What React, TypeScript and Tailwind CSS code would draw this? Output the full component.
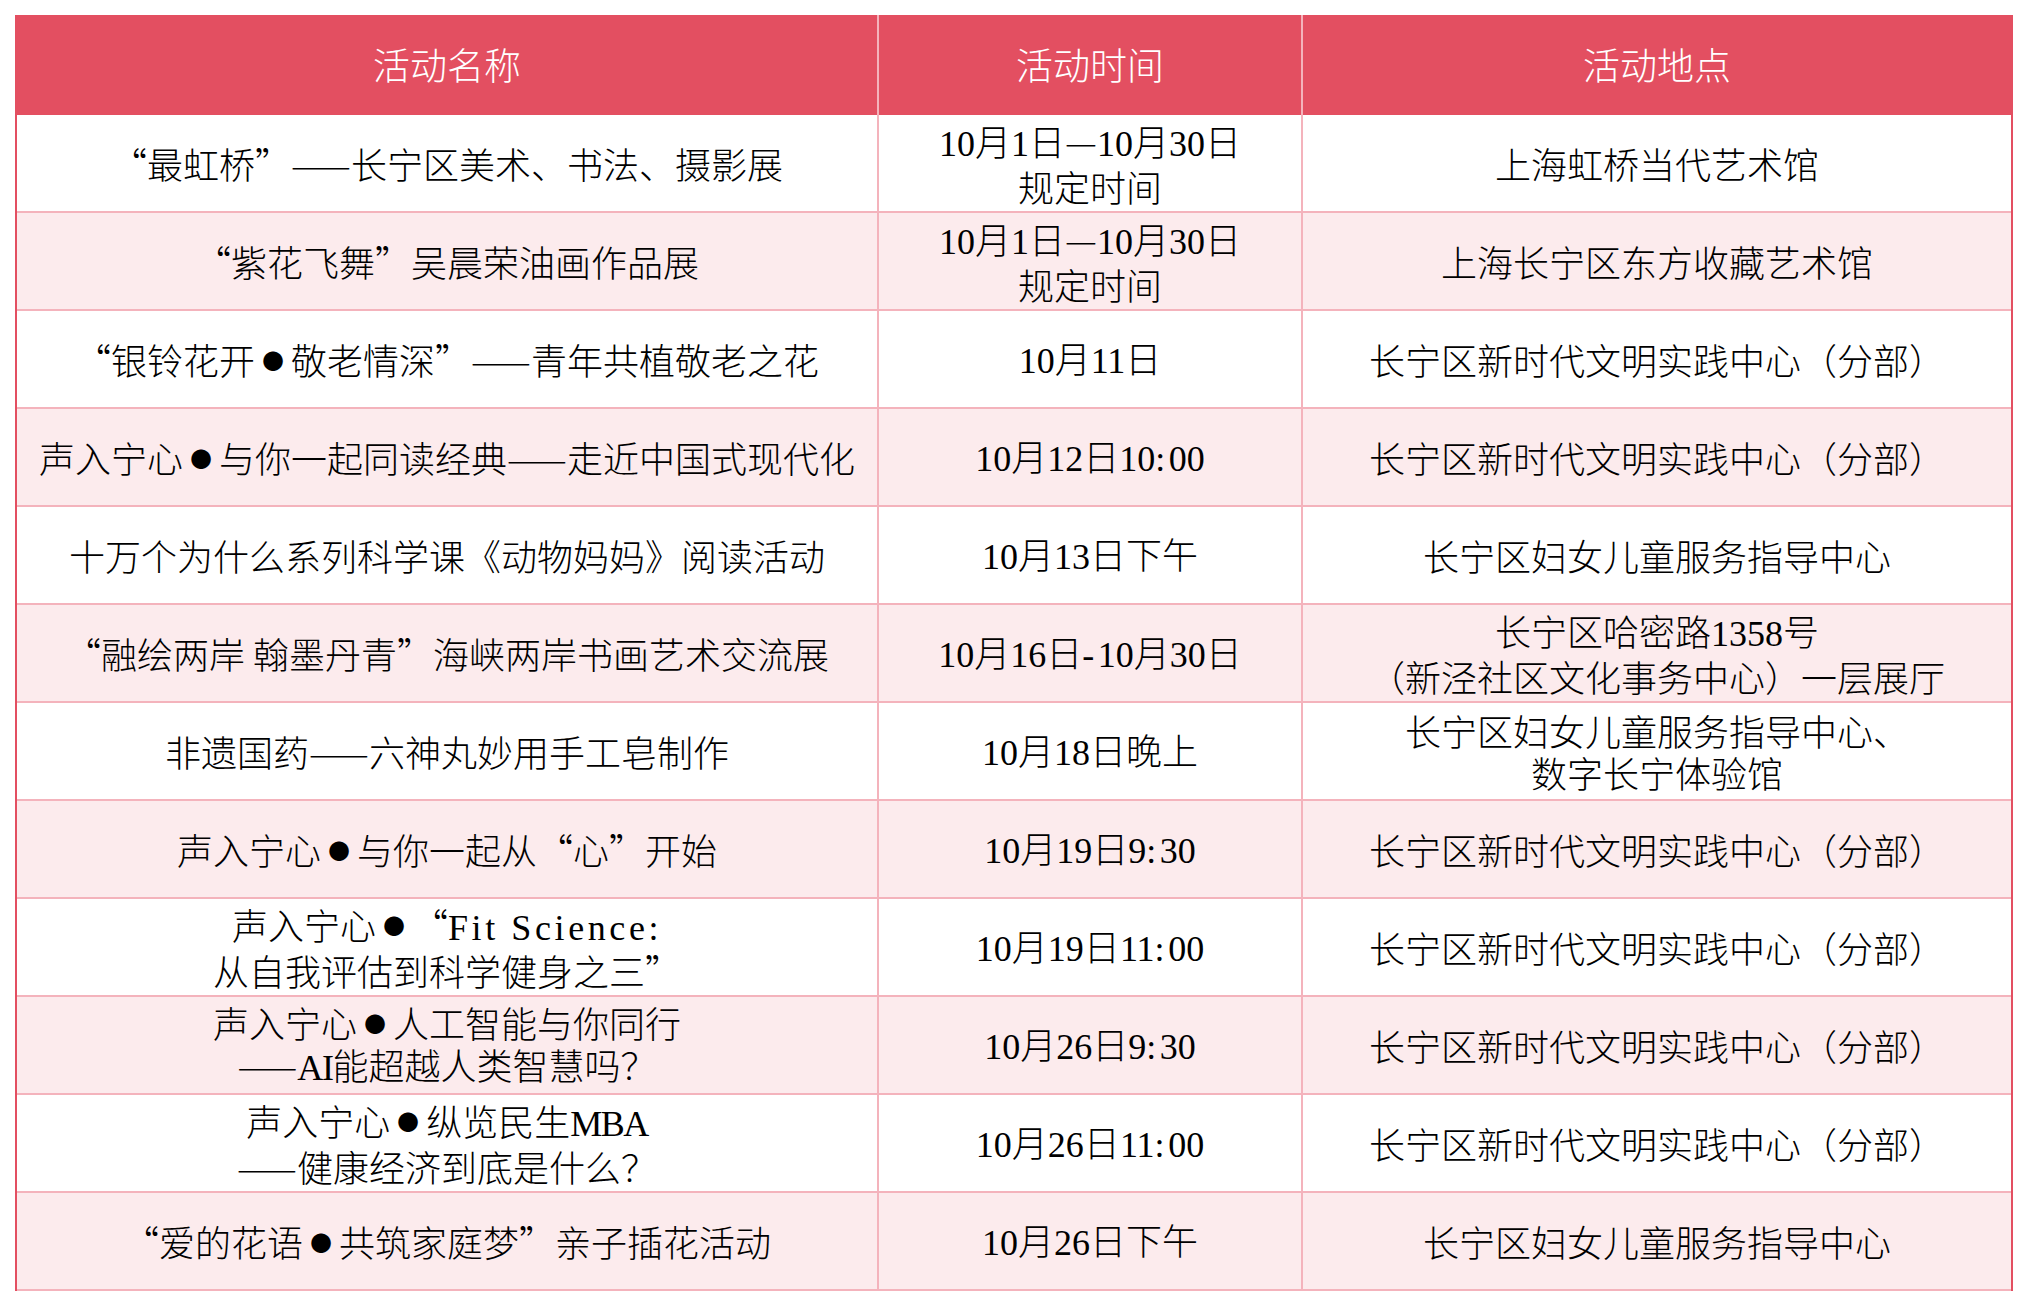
import { Fragment } from "react";

type Row = { name: string; time: string; place: string };

const ROWS: Row[] = [
  { name: "“最虹桥”——长宁区美术、书法、摄影展", time: "10月1日—10月30日\n规定时间", place: "上海虹桥当代艺术馆" },
  { name: "“紫花飞舞”吴晨荣油画作品展", time: "10月1日—10月30日\n规定时间", place: "上海长宁区东方收藏艺术馆" },
  { name: "“银铃花开●敬老情深”——青年共植敬老之花", time: "10月11日", place: "长宁区新时代文明实践中心（分部）" },
  { name: "声入宁心●与你一起同读经典——走近中国式现代化", time: "10月12日10:00", place: "长宁区新时代文明实践中心（分部）" },
  { name: "十万个为什么系列科学课《动物妈妈》阅读活动", time: "10月13日下午", place: "长宁区妇女儿童服务指导中心" },
  { name: "“融绘两岸 翰墨丹青”海峡两岸书画艺术交流展", time: "10月16日-10月30日", place: "长宁区哈密路1358号\n（新泾社区文化事务中心）一层展厅" },
  { name: "非遗国药——六神丸妙用手工皂制作", time: "10月18日晚上", place: "长宁区妇女儿童服务指导中心、\n数字长宁体验馆" },
  { name: "声入宁心●与你一起从“心”开始", time: "10月19日9:30", place: "长宁区新时代文明实践中心（分部）" },
  { name: "声入宁心●“Fit Science:\n从自我评估到科学健身之三”", time: "10月19日11:00", place: "长宁区新时代文明实践中心（分部）" },
  { name: "声入宁心●人工智能与你同行\n——AI能超越人类智慧吗？", time: "10月26日9:30", place: "长宁区新时代文明实践中心（分部）" },
  { name: "声入宁心●纵览民生MBA\n——健康经济到底是什么？", time: "10月26日11:00", place: "长宁区新时代文明实践中心（分部）" },
  { name: "“爱的花语●共筑家庭梦”亲子插花活动", time: "10月26日下午", place: "长宁区妇女儿童服务指导中心" },
];

// split a line so digits / latin get a serif face like the original sheet
function Line({ text }: { text: string }) {
  const parts = text.split(/(\d+|[A-Za-z:\-]+(?: [A-Za-z:\-]+)*|●)/).filter(Boolean);
  return (
    <>
      {parts.map((p, i) => {
        if (/^\d+$/.test(p)) return <span key={i} className="font-['Liberation_Serif']">{p}</span>;
        if (/^[A-Z]+$/.test(p))
          return <span key={i} className="font-['Liberation_Serif'] tracking-[-0.04em]">{p}</span>;
        if (/^[A-Za-z:\-]/.test(p))
          return <span key={i} className="font-['Liberation_Serif'] tracking-[0.1em]">{p}</span>;
        if (p === "●")
          return (
            <span key={i} className="inline-block w-[36px] text-center">
              <span className="inline-block scale-[0.6]">●</span>
            </span>
          );
        return <Fragment key={i}>{p}</Fragment>;
      })}
    </>
  );
}

function Cell({ text, border }: { text: string; border?: boolean }) {
  return (
    <div
      className={
        border
          ? "flex flex-col items-center justify-center border-l-2 border-[#f4b3bc] text-center"
          : "flex flex-col items-center justify-center text-center"
      }
    >
      {text.split("\n").map((l, i) => (
        <div key={i} className="whitespace-pre">
          <Line text={l} />
        </div>
      ))}
    </div>
  );
}

export default function App() {
  return (
    <div className="min-h-screen bg-white pt-[15px] pl-[15px] font-['Noto_Sans_CJK_SC',sans-serif] font-light">
      <div className="w-[1998px] border-x-2 border-[#e34f61]">
        <div className="grid h-[100px] grid-cols-[860px_424px_1fr] bg-[#e34f61] text-[37px] text-white">
          <div className="flex items-center justify-center">活动名称</div>
          <div className="flex items-center justify-center border-l-2 border-[#f4b3bc]">活动时间</div>
          <div className="flex items-center justify-center border-l-2 border-[#f4b3bc]">活动地点</div>
        </div>
        {ROWS.map((r, i) => (
          <div
            key={i}
            className={
              i % 2 === 0
                ? "grid h-[98px] grid-cols-[860px_424px_1fr] border-b-2 border-[#f4b3bc] bg-white text-[36px] leading-[42px] text-black"
                : "grid h-[98px] grid-cols-[860px_424px_1fr] border-b-2 border-[#f4b3bc] bg-[#fcebed] text-[36px] leading-[42px] text-black"
            }
          >
            <Cell text={r.name} />
            <Cell text={r.time} border />
            <Cell text={r.place} border />
          </div>
        ))}
      </div>
    </div>
  );
}
